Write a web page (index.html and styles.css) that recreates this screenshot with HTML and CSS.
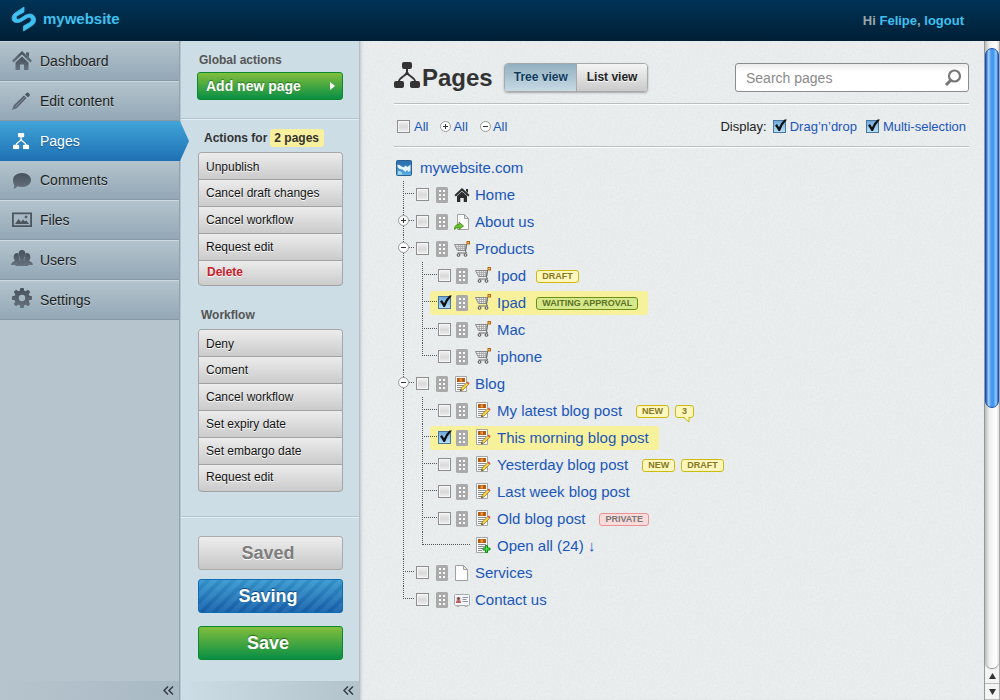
FILE: index.html
```html
<!DOCTYPE html>
<html lang="en">
<head>
<meta charset="utf-8">
<title>Pages - mywebsite</title>
<link rel="stylesheet" href="styles.css">
</head>
<body>
<svg class="sprite" aria-hidden="true">
  <defs>
    <linearGradient id="g-slate" x1="0" y1="0" x2="0" y2="1"><stop offset="0" stop-color="#46515b"/><stop offset="1" stop-color="#66727d"/></linearGradient>
    <linearGradient id="g-globe" x1="0" y1="0" x2="0" y2="1"><stop offset="0" stop-color="#1e5f9e"/><stop offset="1" stop-color="#5fb2e6"/></linearGradient>
    <symbol id="i-sitemap" viewBox="0 0 26 26">
      <rect x="8" y="0" width="10" height="7" rx="2"/>
      <rect x="0" y="19" width="10" height="7" rx="2"/>
      <rect x="16" y="19" width="10" height="7" rx="2"/>
      <path d="M13 6v5M5 20q0-3 4-5.500 3.500-2 4-4.500.5 2.500 4 4.500 4 2.500 4 5.500" fill="none" stroke="currentColor" stroke-width="2"/>
    </symbol>
    <symbol id="i-drag" viewBox="0 0 12 16">
      <rect width="12" height="16" rx="1.500" fill="#aaa"/>
      <path d="M3 3h2v2H3zM7 3h2v2H7zM3 7h2v2H3zM7 7h2v2H7zM3 11h2v2H3zM7 11h2v2H7z" fill="#fff"/>
    </symbol>
    <symbol id="i-cart" viewBox="0 0 16 16">
      <path d="M.5 3.500H12.500L11.500 9.500H3.500z" fill="#e9e9e9" stroke="#8a8a8a"/>
      <path d="M2 5.500h10M2.500 7.500h9.500M4.500 4v5M6.500 4v5M8.500 4v5M10.500 4v5" stroke="#a5a5a5" stroke-width=".8"/>
      <path d="M14 2l-1.500 1.500L11.500 10l1 2H3.500" fill="none" stroke="#666"/>
      <circle cx="4.500" cy="14" r="1.400" fill="#ddd" stroke="#555"/><circle cx="11.500" cy="14" r="1.400" fill="#ddd" stroke="#555"/>
      <rect x="13" y=".5" width="2.500" height="2.500" fill="#f7c25a" stroke="#b5650f"/>
    </symbol>
    <symbol id="i-article" viewBox="0 0 16 16">
      <path d="M1.500.5h11v15h-11z" fill="#fcfcfc" stroke="#a5a5a5"/>
      <path d="M3 2h8v4H3z" fill="#b45a12"/><path d="M5.500 2.500h2.500v3H5.500z" fill="#e8973d"/>
      <path d="M3 7.500h8M3 9.500h8M3 11.500h6M3 13.500h4" stroke="#8c8c8c"/>
    </symbol>
    <symbol id="i-post" viewBox="0 0 16 16">
      <use href="#i-article"/>
      <path d="M6.500 14.800l.8-2.800 5.500-5.500 1.800 1.800L9 14z" fill="#f8d548" stroke="#8c6a12" stroke-width=".7"/>
      <path d="M12.600 6.600l1.200-1.200 1.800 1.800-1.200 1.200z" fill="#dd5548"/><path d="M6.300 15l.6-1.700 1.100 1z" fill="#222"/>
    </symbol>
    <symbol id="i-postadd" viewBox="0 0 16 16">
      <use href="#i-article"/>
      <path d="M10.500 8.500h2v2.500H15v2h-2.500v2.500h-2V13H8v-2h2.500z" fill="#4be04b" stroke="#148c1c"/>
    </symbol>
    <symbol id="i-file" viewBox="0 0 16 16">
      <path d="M1.500.5h8l4 4v11h-12z" fill="#fdfdfd" stroke="#a0a0a0"/><path d="M9.500.5v4h4z" fill="#e8e8e8" stroke="#a0a0a0"/>
    </symbol>
    <symbol id="i-redirect" viewBox="0 0 16 16">
      <path d="M3.500.5h7l4 4v11h-11z" fill="#fdfdfd" stroke="#a0a0a0"/><path d="M10.500.5v4h4z" fill="#e8e8e8" stroke="#a0a0a0"/>
      <path d="M.5 15.500q-.2-5 4.500-5V8.200l4.500 3.800L5 15.500v-2.300q-2.500 0-4.500 2.300z" fill="#6cc12c" stroke="#3d8a12" stroke-width=".8"/>
    </symbol>
    <symbol id="i-contact" viewBox="0 0 16 16">
      <rect x=".5" y="2.500" width="15" height="11" rx="1" fill="#f4f6f9" stroke="#a5a8ad"/>
      <path d="M2 5h5v6H2z" fill="#d5dff0"/><circle cx="4.500" cy="6.500" r="1.500" fill="#8d3b2c"/><path d="M2 11q0-3 2.500-3T7 11z" fill="#c45a55"/>
      <path d="M8.500 5.500h5.500M8.500 7.500h4M8.500 9.500h5.500" stroke="#8b93a0"/><path d="M3 13v1.500h2V13M11 13v1.500h2V13" fill="#ccc" stroke="#999" stroke-width=".6"/>
    </symbol>
    <symbol id="i-home" viewBox="0 0 16 16">
      <path d="M8 1l7.500 7-1.300 1.400L8 3.700 1.800 9.400.5 8z"/><path d="M8 4.500l5 4.600V15H9.700v-4H6.300v4H3V9.100zM12 2h2v4l-2-2z"/>
    </symbol>
    <symbol id="i-globe" viewBox="0 0 16 16">
      <rect x=".5" y=".5" width="15" height="15" rx="1" fill="url(#g-globe)" stroke="#2a5f92"/>
      <path d="M1 1h14v4q-3 .5-5-.5T6 4Q3 3 1 4z" fill="#2f74b2"/>
      <path d="M1.500 4.500q2 0 3.500 1.500t3 1l1.500-1.500 2 1.500 3-2.500v6l-2 1.500-1.500-2-1.500 2-3-2.500-3-.5-2-2z" fill="#e6f5fd"/>
      <path d="M2 11l3 .5 1.500 3H2z" fill="#a6dcf7"/>
    </symbol>
  </defs>
</svg>

<header class="topbar">
  <a class="brand" href="#">
    <svg class="brand-logo" viewBox="0 0 24 24" aria-hidden="true"><path d="M12 0L3 6Q0 8.300 0 11 .3 15.500 5 15.500 8 15.500 10 14L15.500 10.700Q18.500 9.300 19.300 12 19.800 14.200 17.500 15.700L11.500 19V24L20.500 18.300Q24 15.800 23.500 12 22.300 7 17.500 7 15.300 7 13 8.500L7.500 12Q5 13 4.200 11.300 3.700 9.700 6 8.300L12 5z" fill="#40c0f0" stroke="#40c0f0" stroke-width=".8"/></svg>
    <span>mywebsite</span>
  </a>
  <p class="account">Hi <a href="#">Felipe</a>, <a href="#">logout</a></p>
</header>

<div class="workspace">
  <aside class="sidebar">
    <nav class="menu">
      <a class="menu-item" href="#"><svg class="menu-icon" viewBox="0 0 22 20"><path fill="url(#g-slate)" d="M11 0l10 9.700-1.600 1.700L11 3.400l-8.400 8L1 9.700zM15 1.500h3v5l-3-3z"/><path fill="url(#g-slate)" d="M11 5.500l6.500 6V19h-4.500v-5.500H9V19H4.500v-7.500z"/></svg>Dashboard</a>
      <a class="menu-item" href="#"><svg class="menu-icon" viewBox="0 0 22 20"><path fill="url(#g-slate)" d="M1 19l1.500-4.500L13 4.500l2.500 2.500L5.500 17.500zM14 3.500L15.500 2q1-.8 2 .1l1 1q.8 1 0 1.900L16.800 6.300z"/><path d="M4.500 15.500L14 6.300" stroke="#9eacb7" stroke-width=".7"/></svg>Edit content</a>
      <a class="menu-item menu-item-active" href="#" aria-current="page"><svg class="menu-icon" viewBox="-3 -3 35 32"><use href="#i-sitemap" width="26" height="26"/></svg>Pages</a>
      <a class="menu-item menu-item-next" href="#"><svg class="menu-icon" viewBox="0 0 22 20"><path fill="url(#g-slate)" d="M11 3c5 0 9 3 9 7s-4 7-9 7q-2.500 0-4.500-.8Q5 18.500 2.500 19q1-1.500.7-4Q2 13 2 10c0-4 4-7 9-7z"/></svg>Comments</a>
      <a class="menu-item" href="#"><svg class="menu-icon" viewBox="0 0 22 20"><path fill="none" stroke="#4b555e" stroke-width="1.800" d="M1.900 3.400h18.200v12.700H1.900z"/><path fill="#4b555e" d="M4 14l3.500-5 2.500 3 2-2.500 2 2 1.500-1L18 14zM15 5l.7 1.300L17 7l-1.300.7L15 9l-.7-1.300L13 7l1.300-.7z"/></svg>Files</a>
      <a class="menu-item" href="#"><svg class="menu-icon menu-icon-high" viewBox="0 0 22 20"><path fill="url(#g-slate)" d="M0 17q0-2.500 3-3.500 1-.5.500-1.500Q2 10 3 7q1-2 3-2 1.500 0 1.800 1-.3 3 1 5l-.3 2.500Q5 14.500 5 17zM22 17q0-2.500-3-3.500-1-.5-.5-1.500Q20 10 19 7q-1-2-3-2-1.500 0-1.800 1 .3 3-1 5l.3 2.500Q17 14.500 17 17z"/><path fill="url(#g-slate)" d="M11 2q3.300 0 3.300 3.500 0 3-1.500 5.500v1.500q4.700 1.500 4.700 5.500h-13q0-4 4.700-5.500V11Q7.700 8.500 7.700 5.500 7.700 2 11 2z"/></svg>Users</a>
      <a class="menu-item" href="#"><svg class="menu-icon menu-icon-high" viewBox="0 0 22 20"><path fill="url(#g-slate)" fill-rule="evenodd" d="M9.300 0h3.400l.5 2.700 1.500.6L17 1.700l2.300 2.300-1.600 2.300.6 1.500 2.700.5v3.400l-2.700.5-.6 1.500 1.600 2.300-2.300 2.300-2.300-1.600-1.500.6-.5 2.700H9.300l-.5-2.700-1.500-.6L5 18.300 2.700 16l1.600-2.300-.6-1.500-2.700-.5V8.300l2.700-.5.6-1.500L2.700 4 5 1.700l2.300 1.600 1.500-.6zM11 6.800a3.200 3.200 0 100 6.400 3.200 3.200 0 000-6.400z"/></svg>Settings</a>
    </nav>
    <button class="collapse" aria-label="Collapse menu"><svg width="11" height="9" viewBox="0 0 11 9"><path d="M5 .5l-4 4 4 4M10 .5l-4 4 4 4"/></svg></button>
  </aside>

  <aside class="actions">
    <section class="block">
      <h2 class="block-title">Global actions</h2>
      <button class="btn-add">Add new page<svg width="5" height="8" viewBox="0 0 5 8"><path d="M0 0l5 4-5 4z" fill="#fff"/></svg></button>
    </section>
    <section class="block block-lists">
      <h2 class="selection-title">Actions for <mark>2 pages</mark></h2>
      <div class="btn-list">
        <button>Unpublish</button><button>Cancel draft changes</button><button>Cancel workflow</button><button>Request edit</button><button class="danger">Delete</button>
      </div>
      <h2 class="block-title workflow-title">Workflow</h2>
      <div class="btn-list">
        <button>Deny</button><button>Coment</button><button>Cancel workflow</button><button>Set expiry date</button><button>Set embargo date</button><button>Request edit</button>
      </div>
    </section>
    <section class="saves">
      <button class="btn-big btn-saved" disabled>Saved</button>
      <button class="btn-big btn-saving">Saving</button>
      <button class="btn-big btn-save">Save</button>
    </section>
    <button class="collapse" aria-label="Collapse actions"><svg width="11" height="9" viewBox="0 0 11 9"><path d="M5 .5l-4 4 4 4M10 .5l-4 4 4 4"/></svg></button>
  </aside>

  <main class="content">
    <div class="page-head">
      <svg class="page-icon" aria-hidden="true"><use href="#i-sitemap"/></svg>
      <h1>Pages</h1>
      <div class="views"><button class="view-on" aria-pressed="true">Tree view</button><button aria-pressed="false">List view</button></div>
      <form class="search" role="search">
        <input type="text" placeholder="Search pages" aria-label="Search pages">
        <button type="button" aria-label="Search"><svg width="18" height="18" viewBox="0 0 18 18"><circle cx="10.500" cy="7" r="5.500" fill="none" stroke="#777" stroke-width="2.200"/><path d="M6.500 11.500L2 16" stroke="#777" stroke-width="3"/></svg></button>
      </form>
    </div>
    <div class="tools">
      <label class="tool"><input class="check" type="checkbox">All</label>
      <button class="tool tool-expand"><span class="knob knob-plus"></span>All</button>
      <button class="tool tool-fold"><span class="knob"></span>All</button>
      <span class="tools-label">Display:</span>
      <label class="tool"><input class="check" type="checkbox" checked>Drag’n’drop</label>
      <label class="tool tool-multi"><input class="check" type="checkbox" checked>Multi-selection</label>
    </div>

    <div class="tree">
      <div class="root"><svg class="icon"><use href="#i-globe"/></svg><a href="#">mywebsite.com</a></div>
      <ul class="level">
        <li><div class="row"><input class="check" type="checkbox" aria-label="Select Home"><svg class="drag"><use href="#i-drag"/></svg><svg class="icon icon-dark"><use href="#i-home"/></svg><a href="#">Home</a></div></li>
        <li><div class="row"><button class="knob knob-plus" aria-label="Expand About us"></button><input class="check" type="checkbox" aria-label="Select About us"><svg class="drag"><use href="#i-drag"/></svg><svg class="icon"><use href="#i-redirect"/></svg><a href="#">About us</a></div></li>
        <li><div class="row"><button class="knob" aria-label="Collapse Products"></button><input class="check" type="checkbox" aria-label="Select Products"><svg class="drag"><use href="#i-drag"/></svg><svg class="icon"><use href="#i-cart"/></svg><a href="#">Products</a></div>
          <ul class="level sublevel">
            <li><div class="row"><input class="check" type="checkbox" aria-label="Select Ipod"><svg class="drag"><use href="#i-drag"/></svg><svg class="icon"><use href="#i-cart"/></svg><a href="#">Ipod</a><span class="badge">DRAFT</span></div></li>
            <li><div class="row row-on"><input class="check" type="checkbox" aria-label="Select Ipad" checked><svg class="drag"><use href="#i-drag"/></svg><svg class="icon"><use href="#i-cart"/></svg><a href="#">Ipad</a><span class="badge badge-wait">WAITING APPROVAL</span></div></li>
            <li><div class="row"><input class="check" type="checkbox" aria-label="Select Mac"><svg class="drag"><use href="#i-drag"/></svg><svg class="icon"><use href="#i-cart"/></svg><a href="#">Mac</a></div></li>
            <li><div class="row"><input class="check" type="checkbox" aria-label="Select iphone"><svg class="drag"><use href="#i-drag"/></svg><svg class="icon"><use href="#i-cart"/></svg><a href="#">iphone</a></div></li>
          </ul>
        </li>
        <li><div class="row"><button class="knob" aria-label="Collapse Blog"></button><input class="check" type="checkbox" aria-label="Select Blog"><svg class="drag"><use href="#i-drag"/></svg><svg class="icon"><use href="#i-post"/></svg><a href="#">Blog</a></div>
          <ul class="level sublevel posts">
            <li><div class="row"><input class="check" type="checkbox" aria-label="Select My latest blog post"><svg class="drag"><use href="#i-drag"/></svg><svg class="icon"><use href="#i-post"/></svg><a href="#">My latest blog post</a><span class="badge">NEW</span><span class="badge badge-count">3</span></div></li>
            <li><div class="row row-on"><input class="check" type="checkbox" aria-label="Select This morning blog post" checked><svg class="drag"><use href="#i-drag"/></svg><svg class="icon"><use href="#i-post"/></svg><a href="#">This morning blog post</a></div></li>
            <li><div class="row"><input class="check" type="checkbox" aria-label="Select Yesterday blog post"><svg class="drag"><use href="#i-drag"/></svg><svg class="icon"><use href="#i-post"/></svg><a href="#">Yesterday blog post</a><span class="badge">NEW</span><span class="badge">DRAFT</span></div></li>
            <li><div class="row"><input class="check" type="checkbox" aria-label="Select Last week blog post"><svg class="drag"><use href="#i-drag"/></svg><svg class="icon"><use href="#i-post"/></svg><a href="#">Last week blog post</a></div></li>
            <li><div class="row"><input class="check" type="checkbox" aria-label="Select Old blog post"><svg class="drag"><use href="#i-drag"/></svg><svg class="icon"><use href="#i-post"/></svg><a href="#">Old blog post</a><span class="badge badge-private">PRIVATE</span></div></li>
            <li class="more"><div class="row"><svg class="icon"><use href="#i-postadd"/></svg><a href="#">Open all (24) ↓</a></div></li>
          </ul>
        </li>
        <li><div class="row"><input class="check" type="checkbox" aria-label="Select Services"><svg class="drag"><use href="#i-drag"/></svg><svg class="icon"><use href="#i-file"/></svg><a href="#">Services</a></div></li>
        <li><div class="row"><input class="check" type="checkbox" aria-label="Select Contact us"><svg class="drag"><use href="#i-drag"/></svg><svg class="icon"><use href="#i-contact"/></svg><a href="#">Contact us</a></div></li>
      </ul>
    </div>
  </main>

  <div class="scrollbar" aria-hidden="true">
    <div class="scroll-track"><div class="scroll-thumb"></div></div>
    <div class="scroll-step"><svg width="7" height="6" viewBox="0 0 7 6"><path d="M3.500 0L7 6H0z"/></svg></div>
    <div class="scroll-step"><svg width="7" height="6" viewBox="0 0 7 6"><path d="M0 0h7L3.500 6z"/></svg></div>
  </div>
</div>
</body>
</html>
```

FILE: styles.css
```css
* { box-sizing: border-box; }
body {
  margin: 0;
  min-height: 100vh;
  display: flex;
  flex-direction: column;
  font: 12px/14px "Liberation Sans", Arial, sans-serif;
  color: #222;
  background: #e8eced;
}
button, input { font: inherit; color: inherit; }
button { margin: 0; padding: 0; border: 0; background: none; cursor: pointer; }
h1, h2, p, ul { margin: 0; padding: 0; }
a { color: #1a56bb; text-decoration: none; }
svg { flex: none; display: block; }
.sprite { position: absolute; width: 0; height: 0; }

/* Top bar */
.topbar {
  display: flex;
  align-items: center;
  justify-content: space-between;
  height: 41px;
  padding: 0 36px 0 12px;
  background: linear-gradient(#003355, #001f36);
}
.brand { display: flex; align-items: center; gap: 7px; color: #40c0f0; font-size: 15px; font-weight: bold; line-height: 18px; padding-bottom: 3px; }
.brand-logo { width: 24px; height: 24px; overflow: visible; }
.account { font-size: 13px; font-weight: bold; color: #9ba6ad; }
.account a { color: #40c0f0; }

.workspace { flex: 1; display: flex; }

/* Main menu */
.sidebar { width: 180px; display: flex; flex-direction: column; background: #b6c4cd; border-right: 1px solid #93a2ad; }
.menu { flex: 1; }
.menu-item {
  position: relative;
  display: flex;
  align-items: center;
  gap: 7px;
  height: 40px;
  padding: 0 0 1px 11px;
  font-size: 14px;
  color: #1c1f22;
  text-shadow: 0 1px 0 rgba(255, 255, 255, .4);
  background: linear-gradient(#b4c4cd, #93a7b6);
  border-top: 1px solid #ccd8de;
  border-bottom: 1px solid #8899a6;
}
.menu-item-next { height: 39px; border-top: 0; }
.menu-icon { width: 22px; height: 20px; color: #fff; fill: currentColor; }
.menu-icon-high { margin-bottom: 4px; }
.menu-item-active { padding-bottom: 0; color: #fff; text-shadow: 0 1px 1px #1b5588; background: linear-gradient(#41a4d7, #1e71b4); border: 0; }
.menu-item-active::after {
  content: "";
  position: absolute;
  top: 0;
  left: 100%;
  width: 10px;
  height: 100%;
  background: linear-gradient(#41a4d7, #1e71b4);
  clip-path: polygon(0 0, 1px 0, 100% 50%, 1px 100%, 0 100%);
}
.collapse {
  display: flex;
  align-items: center;
  justify-content: flex-end;
  width: 100%;
  height: 19px;
  padding-right: 5px;
  background: linear-gradient(90deg, rgba(160, 178, 190, 0), #a9b9c3);
}
.collapse path { fill: none; stroke: #333b42; stroke-width: 1.5; }
.actions .collapse { background: linear-gradient(90deg, rgba(160, 178, 190, 0), #b3c3cc); }

/* Actions panel */
.actions { width: 180px; display: flex; flex-direction: column; background: #ccdde5; border-left: 1px solid #b5c6d0; border-right: 1px solid #b2bfc6; }
.block { padding: 12px 16px 18px; border-bottom: 1px solid #b2c4ce; box-shadow: 0 1px 0 #e2eef3; }
.block-lists { padding: 10px 16px 24px; }
.block-title { margin-bottom: 5px; padding-left: 2px; font-size: 12px; color: #555; }
.workflow-title { margin: 22px 0 7px; padding-left: 4px; }
.selection-title { display: flex; align-items: center; gap: 3px; margin-bottom: 5px; padding-left: 7px; font-size: 12px; color: #333; }
.selection-title mark { padding: 2px 5px 2px 4px; border-radius: 3px; background: #f8f09c; color: inherit; }
.btn-add {
  display: flex;
  align-items: center;
  justify-content: space-between;
  width: 100%;
  height: 28px;
  padding: 0 7px 0 8px;
  border: 1px solid #0a8a2d;
  border-radius: 3px;
  background: linear-gradient(#82be3c, #088f45);
  font-size: 14px;
  font-weight: bold;
  color: #fff;
  text-shadow: 0 -1px 1px rgba(0, 60, 0, .5);
}
.btn-list { display: flex; flex-direction: column; margin-left: 1px; border: 1px solid #a6a6a6; border-bottom: 0; border-radius: 4px; }
.btn-list button {
  height: 27px;
  padding: 0 7px;
  text-align: left;
  color: #111;
  text-shadow: 0 1px 0 #fff;
  background: linear-gradient(#ececec, #cbcbcb);
  border-bottom: 1px solid #a2a2a2;
}
.btn-list button:first-child { padding-top: 2px; border-radius: 3px 3px 0 0; }
.btn-list button:last-child { padding-bottom: 2px; border-radius: 0 0 4px 4px; }
.btn-list .danger { height: 25px; padding: 0 8px; font-weight: bold; color: #c4202a; }
.saves { flex: 1; padding: 19px 16px 0 17px; }
.btn-big { display: block; width: 100%; height: 34px; padding-right: 5px; border-radius: 3px; font-size: 18px; font-weight: bold; color: #fff; }
.btn-saved { margin-bottom: 9px; border: 1px solid #aaa; background: linear-gradient(#eee, #c6c6c6); color: #7d7d7d; text-shadow: 0 1px 0 #fff; }
.btn-saving {
  margin-bottom: 13px;
  border: 1px solid #0b6cb8;
  background: repeating-linear-gradient(135deg, rgba(255, 255, 255, .06) 0 4px, rgba(0, 20, 80, .06) 5px 8px, rgba(255, 255, 255, .06) 9px), linear-gradient(#3799cf, #1761ab);
  text-shadow: 0 -1px 1px #0d4177;
}
.btn-save { border: 1px solid #0a8a2d; background: linear-gradient(#82be3c, #088f45); text-shadow: 0 -1px 1px rgba(0, 60, 0, .6); }

/* Content */
.content {
  flex: 1;
  min-width: 0;
  padding: 21px 15px 20px 34px;
  box-shadow: inset 3px 0 3px -2px #bcc5c9;
  background: #ebeff0 url("data:image/svg+xml,%3Csvg xmlns='http://www.w3.org/2000/svg' width='200' height='200'%3E%3Cfilter id='n'%3E%3CfeTurbulence type='fractalNoise' baseFrequency='.5' numOctaves='2' stitchTiles='stitch'/%3E%3CfeColorMatrix type='saturate' values='0'/%3E%3C/filter%3E%3Crect width='200' height='200' filter='url(%23n)' opacity='.12'/%3E%3C/svg%3E");
}
.page-head { display: flex; align-items: center; padding-bottom: 10px; border-bottom: 1px solid #bcbfc0; box-shadow: 0 1px 0 #fff; }
.page-icon { width: 26px; height: 26px; margin-bottom: 5px; color: #333; fill: currentColor; }
h1 { margin-left: 2px; font-size: 24px; line-height: 28px; color: #333; }
.views { display: flex; margin-left: 11px; border: 1px solid #a9a9a9; border-radius: 4px; overflow: hidden; box-shadow: 0 1px 2px rgba(0, 0, 0, .3); }
.views button { height: 27px; padding: 0 10px 1px; font-weight: bold; color: #222; background: linear-gradient(#f4f4f4, #cacaca); text-shadow: 0 1px 0 #fff; }
.views .view-on { padding: 0 8px 1px 9px; color: #0d3a5c; background: linear-gradient(#93afbf, #c6dae5); border-right: 1px solid #a9a9a9; text-shadow: 0 1px 0 #c9dce6; }
.search { display: flex; align-items: center; width: 234px; height: 29px; margin-left: auto; padding: 0 6px 0 10px; border: 1px solid #8c8c8c; border-radius: 3px; background: linear-gradient(#ececec, #fff 30%); }
.search input { flex: 1; min-width: 0; padding: 0; border: 0; outline: 0; background: none; font-size: 14px; }
.search input::placeholder { color: #8a8a8a; opacity: 1; }
.tools { display: flex; align-items: center; height: 43px; padding: 3px 3px 0; border-bottom: 1px solid #bcbfc0; box-shadow: 0 1px 0 #fff; font-size: 13px; }
.tool { display: flex; align-items: center; gap: 4px; color: #1a56bb; cursor: pointer; }
.tool-expand, .tool-fold { margin-left: 12px; gap: 2px; }
.tools-label { margin: 0 6px 0 auto; }
.tool-multi { margin-left: 9px; }

.check {
  appearance: none;
  flex: none;
  position: relative;
  width: 13px;
  height: 13px;
  margin: 0;
  border: 1px solid #8e8e8e;
  background: linear-gradient(#f2f2f2, #d9d9d9 55%, #f0f0f0);
  box-shadow: inset 0 0 0 1px #f6f6f6;
}
.check:checked { border-color: #4a759c; background: linear-gradient(#6fa9dd, #b6e0fa); box-shadow: none; }
.check:checked::before {
  content: "";
  position: absolute;
  top: -2px;
  left: 0;
  width: 13px;
  height: 13px;
  background: url("data:image/svg+xml,%3Csvg xmlns='http://www.w3.org/2000/svg' viewBox='0 0 13 13'%3E%3Cpath d='M1 6.500L3 5l2 3.200Q7.500 3 10.500.5H13Q8.500 5 6 12H4.500Q3 9 1 6.500z' fill='%23111'/%3E%3C/svg%3E");
}
.knob {
  flex: none;
  width: 11px;
  height: 11px;
  border: 1px solid #999;
  border-radius: 50%;
  background: linear-gradient(#333, #333) center / 5px 1px no-repeat, #fff;
}
.knob-plus { background: linear-gradient(#333, #333) center / 5px 1px no-repeat, linear-gradient(#333, #333) center / 1px 5px no-repeat, #fff; }

/* Page tree */
.tree { padding-top: 7px; font-size: 15px; line-height: 18px; }
.root { display: flex; align-items: center; gap: 8px; height: 27px; padding-left: 2px; }
.icon { width: 16px; height: 16px; }
.icon-dark { fill: #2c2c2c; }
.drag { width: 12px; height: 16px; }
.level { list-style: none; margin-left: 9px; }
.sublevel { margin-left: 19px; }
.level li { position: relative; }
.level li::before { content: ""; position: absolute; top: 0; left: 0; height: 100%; border-left: 1px dotted #555; }
.level li:last-child::before { height: 13px; }
.level li::after { content: ""; position: absolute; top: 12px; left: 0; width: 11px; border-top: 1px dotted #555; }
.level .sublevel li::after { width: 15px; }
.level .sublevel .more::after { width: 48px; }
.row {
  position: relative;
  display: flex;
  align-items: center;
  width: fit-content;
  height: 24px;
  margin-left: 8px;
  padding: 0 10px 0 5px;
  border-radius: 3px;
}
.level li { padding: 2px 0 1px; }
.level li:has(> .sublevel) { padding-bottom: 0; }
.level li > .sublevel { padding-top: 1px; }
.row-on { background: #f8f19c; }
.row .check { margin: 0 7px 2px 0; }
.row .drag { margin-right: 6px; }
.row .icon { margin-right: 5px; }
.row .knob { position: absolute; z-index: 1; left: -13px; top: 5px; }
.sublevel .row { padding-left: 8px; }
.sublevel .check { margin-right: 5px; }
.sublevel .drag { margin-right: 7px; }
.sublevel .row .icon { margin: 0 6px 2px 0; }
.sublevel .more .row { padding-left: 45px; }

.badge {
  position: relative;
  height: 13px;
  margin-left: 6px;
  padding: 0 5px;
  border: 1px solid #cdb913;
  border-radius: 3px;
  background: #fdf6bd;
  font-size: 9px;
  font-weight: bold;
  line-height: 11px;
  color: #857a22;
}
a + .badge { margin-left: 10px; }
.posts a + .badge { margin-left: 14px; }
.badge-wait { border-color: #6d8f13; background: #d6e88c; color: #5c7222; }
.badge-private { border-color: #ec9292; background: #fadcdc; color: #777; }
.badge-count { padding: 0 6px; }
.badge-count::after {
  content: "";
  position: absolute;
  left: 6px;
  top: 10px;
  width: 9px;
  height: 7px;
  background: url("data:image/svg+xml,%3Csvg xmlns='http://www.w3.org/2000/svg' viewBox='0 0 9 7'%3E%3Cpath d='M1 0L7 6V0z' fill='%23fdf6bd'/%3E%3Cpath d='M1 1L7 6V1' fill='none' stroke='%23cdb913'/%3E%3C/svg%3E");
}

/* Scroll bar */
.scrollbar { width: 16px; display: flex; flex-direction: column; background: #f4f4f4; border-left: 1px solid #999; border-right: 1px solid #aaa; }
.scroll-track { flex: 1; padding-top: 7px; border-radius: 0 0 8px 8px; background: linear-gradient(90deg, #bbb, #eee 30%, #fff 80%, #ddd); box-shadow: 0 1px 1px #888; }
.scroll-thumb {
  height: 58%;
  border: 1px solid #1c4fb0;
  border-radius: 7px;
  background: linear-gradient(90deg, #1e55c8, #9ccdfa 20%, #4a97ee 45%, #3f93f0 60%, #8fd0ff 85%, #2a62c8);
}
.scroll-step { display: flex; align-items: center; justify-content: center; height: 16px; border-bottom: 1px solid #bbb; }
.scroll-step path { fill: #333; }
```
